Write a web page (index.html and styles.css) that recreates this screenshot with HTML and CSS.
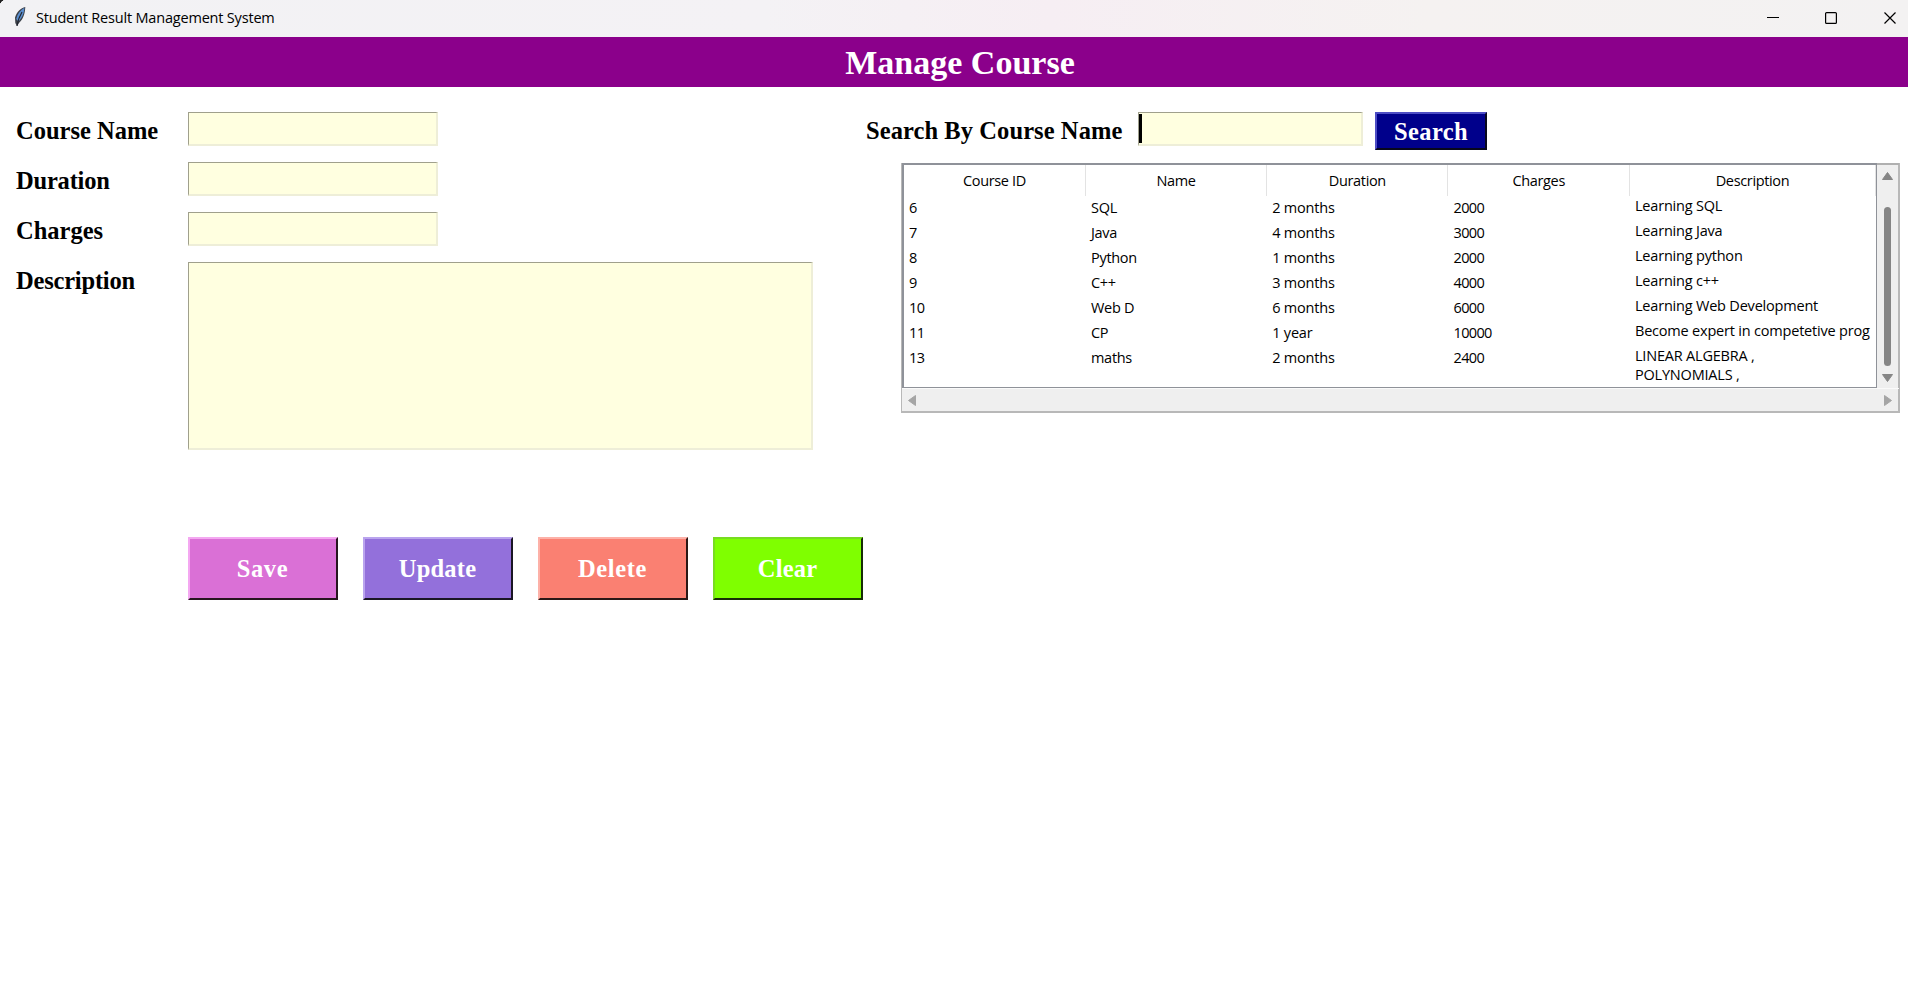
FILE: index.html
```html
<!DOCTYPE html>
<html lang="en">
<head>
<meta charset="utf-8">
<title>Student Result Management System</title>
<link rel="stylesheet" href="styles.css">
</head>
<body>
<header class="titlebar">
  <svg class="feather" viewBox="0 0 14 22" width="14" height="22">
    <path d="M12.3 1C8 1.500 3.500 6.500 2 11.500L2.300 17L4 20L6 17C10 13.500 12 8 12.300 1Z" fill="#3c4148"/>
    <path d="M11.300 1.800C7 4.500 4.500 8 3.200 13L5.500 15.500C9 12 11.300 7 11.300 1.800Z" fill="#5a8fd0"/>
    <path d="M9 6C6.500 10 5 14 4 20" fill="none" stroke="#20242c" stroke-width="1.200"/>
  </svg>
  <span class="window-title">Student Result Management System</span>
  <svg class="controls" viewBox="0 0 130 14" width="130" height="14">
    <path d="M0 6.500H12" stroke="#000" stroke-width="1"/>
    <rect x="58.600" y="1.600" width="10.800" height="10.800" rx="1" fill="none" stroke="#000" stroke-width="1.200"/>
    <path d="M117.500 1.500L128.500 12.500M128.500 1.500L117.500 12.500" stroke="#000" stroke-width="1.200"/>
  </svg>
</header>
<h1 class="banner"><span>Manage Course</span></h1>
<main class="content">
  <section class="form">
    <label class="label" for="name">Course Name</label><input id="name" class="field">
    <label class="label tight" for="duration">Duration</label><input id="duration" class="field">
    <label class="label" for="charges">Charges</label><input id="charges" class="field">
    <label class="label tight" for="description">Description</label><textarea id="description" class="field area"></textarea>
    <div class="actions">
      <button class="button save">Save</button>
      <button class="button update">Update</button>
      <button class="button delete">Delete</button>
      <button class="button clear">Clear</button>
    </div>
  </section>
  <section class="browse">
    <div class="search">
      <label class="label" for="query">Search By Course Name</label>
      <div class="field query" id="query"><i class="caret"></i></div>
      <button class="button find">Search</button>
    </div>
    <div class="frame">
      <div class="tree">
        <div class="row head"><span>Course ID</span><span>Name</span><span>Duration</span><span>Charges</span><span>Description</span></div>
        <div class="row"><span>6</span><span>SQL</span><span>2 months</span><span>2000</span><span>Learning SQL</span></div>
        <div class="row"><span>7</span><span>Java</span><span>4 months</span><span>3000</span><span>Learning Java</span></div>
        <div class="row"><span>8</span><span>Python</span><span>1 months</span><span>2000</span><span>Learning python</span></div>
        <div class="row"><span>9</span><span>C++</span><span>3 months</span><span>4000</span><span>Learning c++</span></div>
        <div class="row"><span>10</span><span>Web D</span><span>6 months</span><span>6000</span><span>Learning Web Development</span></div>
        <div class="row"><span>11</span><span>CP</span><span>1 year</span><span>10000</span><span>Become expert in competetive prog</span></div>
        <div class="row"><span>13</span><span>maths</span><span>2 months</span><span>2400</span><span>LINEAR ALGEBRA ,<br>POLYNOMIALS ,</span></div>
      </div>
      <div class="vbar">
        <svg width="11" height="8" viewBox="0 0 11 8"><path d="M5.500 .5L10.500 7.500H.5Z" fill="#858585" stroke="#858585" stroke-linejoin="round"/></svg>
        <i class="thumb"></i>
        <svg width="11" height="8" viewBox="0 0 11 8"><path d="M5.500 7.500L10.500 .5H.5Z" fill="#858585" stroke="#858585" stroke-linejoin="round"/></svg>
      </div>
      <div class="hbar">
        <svg width="8" height="11" viewBox="0 0 8 11"><path d="M.5 5.500L7.500 .5V10.500Z" fill="#a5a5a5" stroke="#a5a5a5" stroke-linejoin="round"/></svg>
        <svg width="8" height="11" viewBox="0 0 8 11"><path d="M7.500 5.500L.5 .5V10.500Z" fill="#a5a5a5" stroke="#a5a5a5" stroke-linejoin="round"/></svg>
      </div>
    </div>
  </section>
</main>
</body>
</html>
```
FILE: styles.css
```css
* { box-sizing: border-box; }
body { margin: 0; height: 1007px; overflow: hidden; background: #fff; color: #000; font-family: "Open Sans", "Noto Sans", sans-serif; }
.titlebar { height: 37px; display: flex; align-items: center; padding: 0 11px 0 13px; background: radial-gradient(circle at 6px 6px, transparent 6px, #202020 6.500px) 0 0 / 6px 6px no-repeat, linear-gradient(90deg, #f2f2f4 0%, #f4f2f5 40%, #f6eef3 55%, #f5f2f1 75%, #f3f2f2 100%); }
.feather { margin-bottom: 3px; }
.window-title { margin-left: 9px; font-size: 14.500px; letter-spacing: -.19px; line-height: 20px; margin-bottom: 2px; }
.controls { margin-left: auto; margin-bottom: 1px; }
.banner { margin: 0; height: 50px; padding: 1px 0 0 12px; background: #8b008b; color: #fff; text-align: center; font: bold 34px/50px "Liberation Serif", serif; }
.content { display: flex; height: 920px; }
.form { width: 866px; padding: 25px 0 0 16px; display: grid; grid-template-columns: 171.500px 625px; grid-template-rows: 34px 34px 34px 188px 63px; row-gap: 16px; align-content: start; }
.label { padding-top: 1px; font: bold 24.500px/36px "Liberation Serif", serif; white-space: nowrap; }
.tight { letter-spacing: -.2px; }
.field { display: block; margin: 0; padding: 0; width: 250px; height: 34px; background: #ffffe0; border: 2px solid; border-color: #a0a08c #eeeed8 #eeeed8 #a0a08c; border-width: 1.500px 2px 2px 1.500px; border-radius: 0; outline: 0; resize: none; }
.area { width: 625px; height: 188px; }
.actions { grid-column: 2; display: flex; gap: 25px; margin-top: 71px; width: 676px; }
.button { flex: none; width: 150px; height: 63px; padding: 0; border: 2px solid; border-radius: 0; color: #fff; font: bold 24.500px/30px "Liberation Serif", serif; letter-spacing: .2px; }
.save { letter-spacing: .6px; background: #da70d6; border-color: #f4a8f1 #27151f #27151f #f4a8f1; }
.update { background: #9370db; border-color: #baa4ee #1a1624 #1a1624 #baa4ee; }
.delete { background: #fa8072; border-color: #fdb1a8 #2a1816 #2a1816 #fdb1a8; }
.delete { letter-spacing: .6px; }
.clear { background: #7fff00; border-color: #78dc20 #172c06 #172c06 #78dc20; }
.browse { width: 1034px; padding-top: 25px; }
.search { display: flex; height: 38px; }
.search .label { width: 272px; letter-spacing: .08px; }
.query { width: 225px; }
.caret { display: block; width: 3px; height: 29px; margin: 1px 0 0 0; background: #000; }
.find { width: 112px; height: 38px; margin-left: 12px; padding-top: 2px; background: #00008b; border-color: #4d4dc4 #07071c #07071c #4d4dc4; letter-spacing: .4px; }
.frame { width: 999px; height: 250px; margin: 13px 0 0 35px; display: grid; grid-template-columns: 975px 22px; grid-template-rows: 225px 23px; border: 1px solid #b8b8b8; border-width: 0 2px 2px 1px; background: #efefef; }
.tree { border: 2px solid #8f9299; border-width: 2px 1px 1px 2px; background: #fff; overflow: hidden; }
.row { display: grid; grid-template-columns: 182px 181.200px 181.300px 181.500px 246px; height: 25px; font-size: 14.500px; line-height: 25px; letter-spacing: -.2px; white-space: nowrap; }
.row span { padding-left: 5px; }
.row:not(.head) span:nth-child(1), .row:not(.head) span:nth-child(4) { letter-spacing: -.65px; }
.row:not(.head) span:nth-child(2) { letter-spacing: -.3px; }
.row span:last-child { line-height: 19px; margin-top: 1px; }
.head { height: 30px; text-align: center; letter-spacing: -.35px; }
.head span, .head span:last-child { padding: 1px 0 0; margin: 0; line-height: 30px; border-right: 1px solid #e3e3e3; }
.vbar { display: flex; flex-direction: column; align-items: center; justify-content: space-between; padding: 7px 1px 6px 0; border-top: 2px solid #b0b0b0; }
.thumb { width: 7px; height: 159px; margin: auto 0 8px; border-radius: 4px; background: #858585; }
.hbar { grid-column: 1 / 3; display: flex; align-items: center; justify-content: space-between; padding: 0 7px 0 6px; border-top: 1px solid #fafafa; }
```
